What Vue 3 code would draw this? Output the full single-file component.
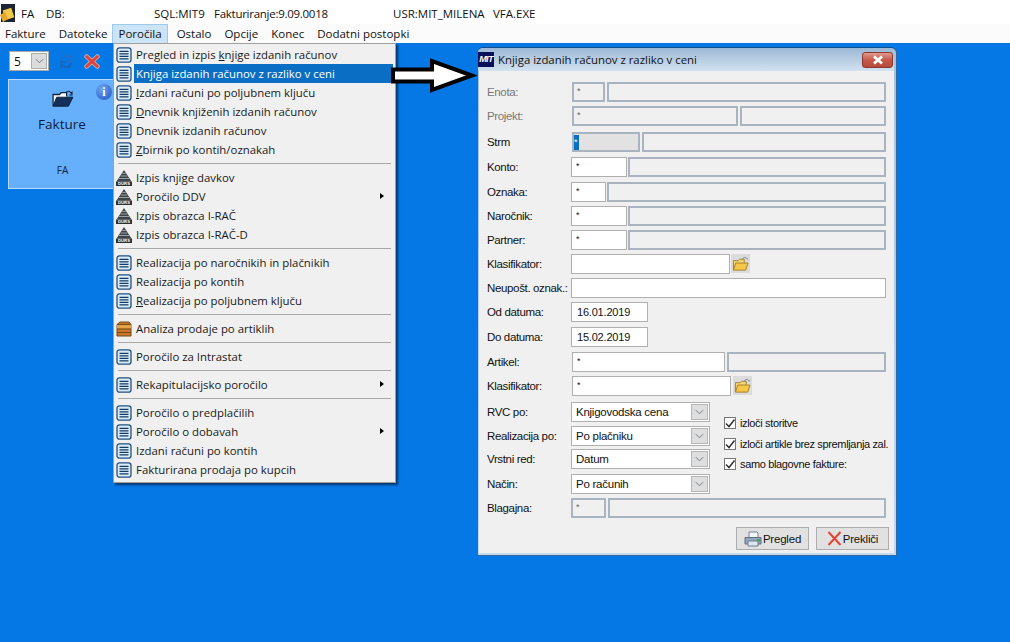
<script setup>
const menus = ['Fakture', 'Datoteke', 'Poročila', 'Ostalo', 'Opcije', 'Konec', 'Dodatni postopki']

const menuGroups = [
  [
    { icon: 'list', pre: 'Pregled in izpis ', hk: 'k', post: 'njige izdanih računov' },
    { icon: 'list', pre: '', hk: '', post: 'Knjiga izdanih računov z razliko v ceni', active: true },
    { icon: 'list', pre: '', hk: 'I', post: 'zdani računi po poljubnem ključu' },
    { icon: 'list', pre: '', hk: 'D', post: 'nevnik knjiženih izdanih računov' },
    { icon: 'list', pre: '', hk: '', post: 'Dnevnik izdanih računov' },
    { icon: 'list', pre: '', hk: 'Z', post: 'birnik po kontih/oznakah' }
  ],
  [
    { icon: 'durs', pre: '', hk: '', post: 'Izpis knjige davkov' },
    { icon: 'durs', pre: '', hk: '', post: 'Poročilo DDV', sub: true },
    { icon: 'durs', pre: '', hk: '', post: 'Izpis obrazca I-RAČ' },
    { icon: 'durs', pre: '', hk: '', post: 'Izpis obrazca I-RAČ-D' }
  ],
  [
    { icon: 'list', pre: '', hk: '', post: 'Realizacija po naročnikih in plačnikih' },
    { icon: 'list', pre: '', hk: '', post: 'Realizacija po kontih' },
    { icon: 'list', pre: '', hk: 'R', post: 'ealizacija po poljubnem ključu' }
  ],
  [{ icon: 'box', pre: '', hk: '', post: 'Analiza prodaje po artiklih' }],
  [{ icon: 'list', pre: '', hk: '', post: 'Poročilo za Intrastat' }],
  [{ icon: 'list', pre: '', hk: '', post: 'Rekapitulacijsko poročilo', sub: true }],
  [
    { icon: 'list', pre: '', hk: '', post: 'Poročilo o predplačilih' },
    { icon: 'list', pre: '', hk: '', post: 'Poročilo o dobavah', sub: true },
    { icon: 'list', pre: '', hk: '', post: 'Izdani računi po kontih' },
    { icon: 'list', pre: '', hk: '', post: 'Fakturirana prodaja po kupcih' }
  ]
]

const rows = [
  { label: 'Enota:', off: true, inset: 1, gap: 2, segs: [{ w: 33, t: 'off', v: '*' }, { t: 'off' }] },
  { label: 'Projekt:', off: true, inset: 1, gap: 2, segs: [{ w: 166, t: 'off', v: '*' }, { t: 'off' }] },
  { label: 'Strm', inset: 1, gap: 2, segs: [{ w: 68, t: 'focus', v: '*' }, { t: 'off' }] },
  { label: 'Konto:', gap: 1, segs: [{ w: 56, t: 'on', v: '*' }, { t: 'off' }] },
  { label: 'Oznaka:', gap: 1, segs: [{ w: 35, t: 'on', v: '*' }, { t: 'off' }] },
  { label: 'Naročnik:', gap: 1, segs: [{ w: 56, t: 'on', v: '*' }, { t: 'off' }] },
  { label: 'Partner:', gap: 1, segs: [{ w: 56, t: 'on', v: '*' }, { t: 'off' }] },
  { label: 'Klasifikator:', gap: 1, folder: true, segs: [{ w: 159, t: 'on', v: '' }] },
  { label: 'Neupošt. oznak.:', segs: [{ t: 'on', v: '' }] },
  { label: 'Od datuma:', segs: [{ w: 77, t: 'on', v: '16.01.2019', date: true }] },
  { label: 'Do datuma:', segs: [{ w: 77, t: 'on', v: '15.02.2019', date: true }] },
  { label: 'Artikel:', inset: 1, gap: 2, segs: [{ w: 153, t: 'on', v: '*' }, { t: 'off' }] },
  { label: 'Klasifikator:', inset: 1, gap: 2, folder: true, segs: [{ w: 159, t: 'on', v: '*' }] }
]

const selects = [
  { label: 'RVC po:', v: 'Knjigovodska cena' },
  { label: 'Realizacija po:', v: 'Po plačniku' },
  { label: 'Vrstni red:', v: 'Datum' },
  { label: 'Način:', v: 'Po računih' }
]

const checks = ['izloči storitve', 'izloči artikle brez spremljanja zal.', 'samo blagovne fakture:']
</script>

<template>
  <div class="app">
    <svg class="defs" aria-hidden="true">
      <symbol id="i-list" viewBox="0 0 16 16">
        <rect x="1" y="0.800" width="14" height="14.400" rx="2.500" fill="#d9ebfa" stroke="#24517d" stroke-width="1.300" />
        <path d="M3.500 4.300h9M3.500 6.800h9M3.500 9.300h9M3.500 11.800h9" stroke="#173a60" stroke-width="1.300" />
      </symbol>
      <symbol id="i-durs" viewBox="0 0 16 16">
        <path d="M8 0 15.500 11.500H.5z" fill="#3f4448" />
        <path d="M6.300 3.500h3.400M4.700 6h6.600M3 8.500h10" stroke="#a4a9ad" stroke-width=".9" />
        <rect x="0" y="11.500" width="16" height="4.500" fill="#2d3033" />
      </symbol>
      <symbol id="i-box" viewBox="0 0 16 16">
        <path d="M1 3.500 4 1h9l2 2.500V15H1z" fill="#c9762a" stroke="#6e4a1c" />
        <path d="M1 4h14v3.600H1z" fill="#e3a34a" />
        <path d="M1 3.500h14M1 8h14M1 11.500h14" stroke="#7a4a14" />
      </symbol>
      <symbol id="i-folder" viewBox="0 0 18 18">
        <path d="M1.500 16V6h5l1.500-1.500h5V8" fill="#f4d67a" stroke="#a67c22" />
        <path d="M1.500 16 4 8.500h13L14.500 16z" fill="#f5c84a" stroke="#a67c22" />
        <path d="M11 4.500c1-2.500 4-2.500 5 0l1-.8" fill="none" stroke="#6c7f96" />
      </symbol>
    </svg>

    <header class="titlebar">
      <svg class="app-icon" viewBox="0 0 16 18">
        <rect x="1" y="0" width="14" height="18" fill="#1c2433" />
        <rect x="4" y="5" width="9" height="10" fill="#f2c84b" transform="rotate(-18 8 10)" />
        <path d="M0 11l5-3 3 7-5 3z" fill="#e7a52a" />
      </svg>
      <span class="t-fa">FA</span>
      <span class="t-db">DB:</span>
      <span class="t-sql">SQL:MIT9</span>
      <span class="t-fak">Fakturiranje:9.09.0018</span>
      <span class="t-usr">USR:MIT_MILENA</span>
      <span>VFA.EXE</span>
    </header>

    <nav class="menubar">
      <span v-for="m in menus" :key="m" class="menu-top" :class="{ open: m === 'Poročila' }">{{ m }}</span>
    </nav>

    <main class="desktop">
      <div class="toolbar">
        <div class="tb-select">
          <span>5</span>
          <span class="tb-drop">
            <svg viewBox="0 0 10 6" width="9" height="6"><path d="M1 1l4 4 4-4" fill="none" stroke="#6f7b88" stroke-width="1.100" /></svg>
          </span>
        </div>
        <svg class="tb-refresh" viewBox="0 0 14 18" width="13" height="17">
          <path d="M2 8a5 5 0 0 1 9-3l1.500-1.500V8.500H8" fill="none" stroke="#1f6fcb" stroke-width="2" />
          <path d="M12 10a5 5 0 0 1-9 3l-1.500 1.500V9.500H6" fill="none" stroke="#1a66bf" stroke-width="2" />
        </svg>
        <svg class="tb-x" viewBox="0 0 18 16" width="16" height="15">
          <path d="M3 2.500 15 13.500M15 2.500 3 13.500" stroke="#c9c4c4" stroke-width="5" stroke-linecap="round" />
          <path d="M3 2.500 15 13.500M15 2.500 3 13.500" stroke="#e3443a" stroke-width="3.400" stroke-linecap="round" />
        </svg>
      </div>

      <div class="tile">
        <svg class="tile-folder" viewBox="0 0 24 20" width="22" height="18">
          <path d="M1 18V5h7l2-2h6v4" fill="#fff" stroke="#10233f" stroke-width="1.400" />
          <path d="M1 18 5 8h18l-5 10z" fill="#12305a" stroke="#0b1a30" />
          <path d="M15 3c2-2.500 5-2 6 .5l1-1v3h-3" fill="none" stroke="#10233f" stroke-width="1.200" />
        </svg>
        <div class="tile-name">Fakture</div>
        <div class="tile-code">FA</div>
        <span class="tile-info">i</span>
      </div>
    </main>

    <div class="menu">
      <template v-for="(group, gi) in menuGroups" :key="gi">
        <div v-if="gi" class="sep"></div>
        <div v-for="item in group" :key="item.post" class="item" :class="{ active: item.active }">
          <svg class="item-icon" viewBox="0 0 16 16">
            <use :href="'#i-' + item.icon" width="16" height="16" />
            <text v-if="item.icon === 'durs'" x="8" y="15.300" text-anchor="middle" class="durs-text">DURS</text>
          </svg>
          <span class="item-text">{{ item.pre }}<u v-if="item.hk">{{ item.hk }}</u>{{ item.post }}</span>
          <span v-if="item.sub" class="caret"></span>
        </div>
      </template>
    </div>

    <svg class="arrow" viewBox="0 0 90 40" width="90" height="40">
      <path d="M3 13.500H42V5L82 19.500 42 34V25.500H3z" fill="#fff" stroke="#000" stroke-width="4" stroke-linejoin="miter" />
    </svg>

    <section class="dialog">
      <div class="dlg-title">
        <span class="dlg-logo">MIT</span>
        <span class="dlg-caption">Knjiga izdanih računov z razliko v ceni</span>
        <span class="dlg-close">
          <svg viewBox="0 0 12 10" width="12" height="10"><path d="M2 1.500 10 8.500M10 1.500 2 8.500" stroke="#fff" stroke-width="2.800" /></svg>
        </span>
      </div>

      <div class="dlg-body">
        <div class="form">
          <template v-for="row in rows" :key="row.label + row.segs.length + row.inset">
            <label class="lbl" :class="{ muted: row.off }">{{ row.label }}</label>
            <div class="fld" :class="{ inset: row.inset }" :style="{ gap: (row.gap || 0) + 'px' }">
              <span
                v-for="(s, i) in row.segs"
                :key="i"
                class="seg"
                :class="['seg-' + s.t, { grow: !s.w, date: s.date }]"
                :style="s.w ? { width: s.w + 'px' } : null"
              ><span class="val">{{ s.v }}</span></span>
              <span v-if="row.folder" class="folder-btn"><svg width="17" height="17" viewBox="0 0 18 18"><use href="#i-folder" width="18" height="18" /></svg></span>
            </div>
          </template>

          <template v-for="s in selects" :key="s.label">
            <label class="lbl">{{ s.label }}</label>
            <div class="sel">
              <span class="sel-v">{{ s.v }}</span>
              <span class="sel-drop">
                <svg viewBox="0 0 10 6" width="9" height="6"><path d="M1 1l4 4 4-4" fill="none" stroke="#6f7b88" stroke-width="1.100" /></svg>
              </span>
            </div>
          </template>

          <div class="checks">
            <div v-for="c in checks" :key="c" class="chk">
              <span class="box">
                <svg viewBox="0 0 12 12" width="12" height="12"><path d="M2 6.500 5 9.500 10.500 2.500" fill="none" stroke="#333" stroke-width="1.500" /></svg>
              </span>
              <span>{{ c }}</span>
            </div>
          </div>

          <label class="lbl">Blagajna:</label>
          <div class="fld fld-last">
            <span class="seg seg-off blag"><span class="val">*</span></span>
            <span class="seg seg-off grow"></span>
          </div>
        </div>

        <div class="actions">
          <button class="btn">
            <svg viewBox="0 0 18 16" width="18" height="16">
              <path d="M5 7V1h8l1 1v5z" fill="#f4f7fa" stroke="#77828c" />
              <path d="M1 6.500h16v6.500H1z" fill="#8fa6bb" stroke="#5e6f7e" />
              <path d="M4 10h10v5H4z" fill="#dfe7ee" stroke="#70808d" />
              <rect x="13" y="8" width="3" height="2.500" fill="#2fb84a" />
            </svg>
            <span>Pregled</span>
          </button>
          <button class="btn">
            <svg viewBox="0 0 15 15" width="15" height="15"><path d="M1.500 1 13.500 14M13.500 1 1.500 14" stroke="#e8412f" stroke-width="1.900" /></svg>
            <span>Prekliči</span>
          </button>
        </div>
      </div>
    </section>
  </div>
</template>

<style>
html, body { margin: 0; background: #0578e6; }
</style>

<style scoped>
.app {
  position: relative;
  width: 1010px;
  height: 642px;
  overflow: hidden;
  display: flex;
  flex-direction: column;
  font-family: "Open Sans", "Liberation Sans", sans-serif;
  font-size: 11.4px;
  color: #111;
}
.defs { position: absolute; width: 0; height: 0; }

.titlebar {
  height: 24px;
  flex: none;
  background: #fff;
  display: flex;
  align-items: center;
  padding-top: 2px;
  box-sizing: border-box;
  font-size: 11.5px;
  white-space: nowrap;
}
.app-icon { width: 16px; height: 18px; margin-right: 5px; flex: none; }
.t-fa { width: 25px; }
.t-db { width: 108px; }
.t-sql { width: 60px; }
.t-fak { width: 179px; letter-spacing: -.27px; }
.t-usr { width: 100px; }

.menubar {
  height: 19px;
  flex: none;
  background: #fbfbfb;
  display: flex;
  margin-left: 0;
  padding-left: 0;
  font-size: 11.5px;
}
.menu-top {
  padding: 0 5.5px;
  box-sizing: border-box;
  border: 1px solid transparent;
  border-bottom: 0;
  line-height: 18px;
}
.menu-top:first-child { margin-left: -1.5px; }
.menu-top.open { background: #cce4f7; border-color: #9ccbef; margin-left: -2px; margin-right: 2px; }

.desktop { flex: 1; background: #0578e6; padding: 8px; box-sizing: border-box; }
.toolbar { display: flex; align-items: center; height: 20px; margin-left: 1px; }
.tb-select {
  width: 40px;
  height: 20px;
  box-sizing: border-box;
  background: #fff;
  border: 1px solid #a9a9a9;
  display: flex;
  align-items: center;
  justify-content: space-between;
  padding: 0 1px 0 4px;
  font-size: 12px;
}
.tb-drop {
  width: 16px;
  height: 16px;
  background: #dcdcdc;
  border: 1px solid #adadad;
  box-sizing: border-box;
  display: flex;
  align-items: center;
  justify-content: center;
}
.tb-refresh { margin-left: 11px; }
.tb-x { margin-left: 11px; }

.tile {
  position: relative;
  margin-top: 8px;
  width: 108px;
  height: 110px;
  box-sizing: border-box;
  background: #66b0fb;
  border: 1px solid #b5d9ff;
  text-align: center;
  color: #10203a;
}
.tile-folder { position: absolute; left: 43px; top: 10px; }
.tile-name { padding-top: 34px; font-size: 13.5px; line-height: 20px; }
.tile-code { padding-top: 29px; font-size: 10px; line-height: 14px; margin-left: 1px; }
.tile-info {
  position: absolute;
  left: 87px;
  top: 4px;
  width: 16px;
  height: 16px;
  border-radius: 50%;
  background: radial-gradient(circle at 35% 30%, #6ea3f0, #1f55c4);
  color: #fff;
  font: 700 12px/16px "Liberation Serif", serif;
  text-align: center;
}

.menu {
  position: absolute;
  left: 113px;
  top: 43px;
  width: 283px;
  height: 440px;
  box-sizing: border-box;
  padding: 1px 2px 0;
  background: #f0f0f0;
  border: 1px solid #a0a0a0;
  box-shadow: 2px 2px 2px rgba(0, 0, 0, .55);
  font-size: 11.4px;
  color: #1a1a1a;
}
.item { position: relative; height: 19px; display: flex; align-items: center; white-space: nowrap; }
.item-icon { width: 16px; height: 16px; flex: none; margin-right: 2px; }
.durs-text { font: 700 4.2px "Liberation Sans", sans-serif; fill: #fff; }
.item-text { flex: 1; line-height: 19px; padding-left: 2px; }
.item-text u { text-underline-offset: 1px; }
.item.active .item-text { background: #0a6fc4; color: #fff; }
.sep { height: 1px; margin: 4px 2px; background: #a8a8a8; }
.caret {
  position: absolute;
  right: 9px;
  top: 6px;
  border-left: 4px solid #000;
  border-top: 3.5px solid transparent;
  border-bottom: 3.5px solid transparent;
}

.arrow { position: absolute; left: 390px; top: 56px; }

.dialog {
  position: absolute;
  left: 477px;
  top: 47px;
  width: 420px;
  height: 509px;
  box-sizing: border-box;
  display: flex;
  flex-direction: column;
  border-radius: 6px 6px 0 0;
  background: linear-gradient(#a8c2dc, #c4d9ec);
  border: 1px solid #2f6aa6;
  border-top-color: #14508e;
  padding: 0 2px 2px 0;
}
.dlg-title { height: 23px; flex: none; display: flex; align-items: center; background: linear-gradient(#9cb8d6, #d3e2f0); border-radius: 5px 5px 0 0; }
.dlg-logo {
  width: 16px;
  height: 15px;
  margin-right: 4px;
  background: #0a0f5a;
  color: #fff;
  font: italic 700 9px/15px "Liberation Sans", sans-serif;
  letter-spacing: -.6px;
  overflow: hidden;
  text-align: center;
}
.dlg-caption { flex: 1; white-space: nowrap; font-size: 11.4px; color: #111; }
.dlg-close {
  width: 31px;
  height: 16px;
  margin-right: 1px;
  display: flex;
  align-items: center;
  justify-content: center;
  box-sizing: border-box;
  border: 1px solid #8c3a30;
  border-radius: 3px;
  background: linear-gradient(#e09a90, #c65a4a 50%, #b8493a);
}
.dlg-body { flex: 1; background: #f0f0f0; display: flex; flex-direction: column; padding: 11px 8px 0 8px; margin-left: 1px; min-height: 0; }

.form {
  display: grid;
  grid-template-columns: 84px 139px minmax(0, 1fr);
  grid-template-rows: 24px 26px 25px 25px 24px 24px 24px 24px 24px 25px 25px 24px 26px 24px 23px 25px 24px 20px;
  font-family: "Liberation Sans", sans-serif;
  font-size: 11.5px;
  letter-spacing: -.35px;
}
.lbl { grid-column: 1; height: 20px; line-height: 21px; color: #111; white-space: nowrap; }
.lbl.muted { color: #777; }
.fld { grid-column: 2 / 4; height: 20px; display: flex; }
.fld.inset { padding-left: 1px; }
.fld-last { gap: 2px; }
.seg { height: 20px; box-sizing: border-box; flex: none; display: block; position: relative; }
.seg.grow { flex: 1; }
.blag { width: 35px; }
.seg-on { background: #fff; border: 1px solid #b0b0b0; }
.seg-off { background: #f0f0f0; border: 2px solid #a9b4c0; }
.seg-focus { background: #e2e2e2; border: 2px solid #a9b4c0; }
.seg-focus .val { background: #0a6fc4; color: #fff; display: inline-block; width: 5px; height: 15px; left: 0; top: 1px; padding: 0; }
.val { position: absolute; left: 4px; top: 1px; font-size: 9px; line-height: 14px; }
.seg-off .val { left: 3px; top: 0; color: #666; }
.date .val { left: 5px; top: 2px; font-size: 11px; line-height: 15px; letter-spacing: -.2px; }
.folder-btn {
  width: 19px;
  height: 19px;
  display: flex;
  align-items: center;
  justify-content: center;
  background: #dcdcdc;
}

.sel {
  grid-column: 2;
  height: 20px;
  box-sizing: border-box;
  background: #fff;
  border: 1px solid #b0b0b0;
  display: flex;
  align-items: center;
  justify-content: space-between;
  padding: 0 1px 0 4px;
  letter-spacing: -.25px;
}
.sel-drop {
  width: 17px;
  height: 16px;
  box-sizing: border-box;
  background: #dedede;
  border: 1px solid #b5b5b5;
  display: flex;
  align-items: center;
  justify-content: center;
}
.checks {
  grid-column: 3;
  grid-row: 14 / span 4;
  display: flex;
  flex-direction: column;
  gap: 8.5px;
  padding: 15px 0 0 14px;
  white-space: nowrap;
}
.chk { display: flex; align-items: center; height: 12px; gap: 4px; font-size: 11px; }
.box { width: 12px; height: 12px; box-sizing: border-box; border: 1px solid #777; background: #fff; flex: none; display: flex; }
.box svg { margin: -1px; flex: none; }

.actions { display: flex; justify-content: flex-end; gap: 7px; margin-top: 9px; margin-right: -3px; }
.btn {
  width: 73px;
  height: 23px;
  padding: 0;
  display: flex;
  align-items: center;
  justify-content: center;
  gap: 1px;
  background: #e1e1e1;
  border: 1px solid #adadad;
  font-family: "Liberation Sans", sans-serif;
  font-size: 11.5px;
  letter-spacing: -.2px;
  color: #111;
}
</style>
